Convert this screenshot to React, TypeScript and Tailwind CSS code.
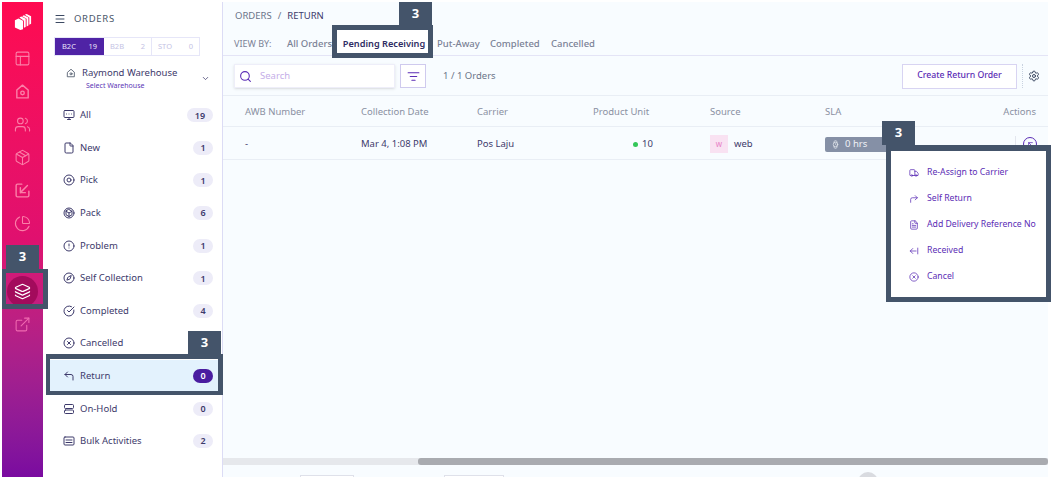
import {
  AlertCircle, ArrowLeftFromLine, ArrowUpLeft, ChevronDown, CircleCheckBig, Compass, CornerUpLeft, CornerUpRight,
  ExternalLink, File, FileText, Layers, ListFilter, Menu, Package, PanelsTopLeft, PieChart, Search, Settings, Truck, Users, Watch, XCircle,
} from 'lucide-react';
import type { ReactNode } from 'react';

const font = { fontFamily: '"Noto Sans", sans-serif' };

const Svg = ({ size = 12, children, className }: { size?: number; children: ReactNode; className?: string }) => (
  <svg viewBox="0 0 24 24" width={size} height={size} fill="none" stroke="currentColor" strokeWidth={2} strokeLinecap="round" strokeLinejoin="round" className={className}>
    {children}
  </svg>
);

const HomeDot = ({ size = 12, className }: { size?: number; strokeWidth?: number; className?: string }) => (
  <Svg size={size} className={className}>
    <path d="M4 10l8-7 8 7v11H4z" />
    <circle cx="12" cy="14" r="2.500" />
  </Svg>
);
const InBox = ({ size = 12, className }: { size?: number; strokeWidth?: number; className?: string }) => (
  <Svg size={size} className={className}>
    <path d="M11 3H5a2 2 0 0 0-2 2v14a2 2 0 0 0 2 2h14a2 2 0 0 0 2-2v-6" />
    <path d="M19 5L9 15M9 8v7h7" />
  </Svg>
);
const Screen = ({ size = 12, className }: { size?: number; strokeWidth?: number; className?: string }) => (
  <Svg size={size} className={className}>
    <rect x="2" y="3" width="20" height="14" rx="2" />
    <path d="M7 10h.01M12 10h.01M17 10h.01M9 21h6M12 17v4" />
  </Svg>
);
const Target = ({ size = 12, className }: { size?: number; strokeWidth?: number; className?: string }) => (
  <Svg size={size} className={className}>
    <circle cx="12" cy="12" r="10" />
    <circle cx="12" cy="12" r="4" />
  </Svg>
);
const RoundBox = ({ size = 12, className }: { size?: number; strokeWidth?: number; className?: string }) => (
  <Svg size={size} className={className}>
    <circle cx="12" cy="12" r="10" />
    <path d="M12 5l6 3.500v7L12 19l-6-3.500v-7zM6 8.500l6 3.500 6-3.500M12 12v7" />
  </Svg>
);
const Hold = ({ size = 12, className }: { size?: number; strokeWidth?: number; className?: string }) => (
  <Svg size={size} className={className}>
    <rect x="3" y="3" width="18" height="8" rx="2" />
    <rect x="3" y="14" width="18" height="7" rx="2" />
  </Svg>
);
const Bulk = ({ size = 12, className }: { size?: number; strokeWidth?: number; className?: string }) => (
  <Svg size={size} className={className}>
    <rect x="2" y="4" width="20" height="16" rx="2" />
    <path d="M6 10h12M6 15h12" />
  </Svg>
);

const menu = [
  { label: 'All', count: 19, icon: Screen },
  { label: 'New', count: 1, icon: File },
  { label: 'Pick', count: 1, icon: Target },
  { label: 'Pack', count: 6, icon: RoundBox },
  { label: 'Problem', count: 1, icon: AlertCircle },
  { label: 'Self Collection', count: 1, icon: Compass },
  { label: 'Completed', count: 4, icon: CircleCheckBig },
  { label: 'Cancelled', count: null, icon: XCircle },
  { label: 'Return', count: 0, icon: CornerUpLeft, active: true },
  { label: 'On-Hold', count: 0, icon: Hold },
  { label: 'Bulk Activities', count: 2, icon: Bulk },
];

const railIcons = [PanelsTopLeft, HomeDot, Users, Package, InBox, PieChart];

const actions = [
  { label: 'Re-Assign to Carrier', icon: Truck },
  { label: 'Self Return', icon: CornerUpRight },
  { label: 'Add Delivery Reference No', icon: FileText },
  { label: 'Received', icon: ArrowLeftFromLine },
  { label: 'Cancel', icon: XCircle },
];

const Tag = ({ className }: { className: string }) => (
  <div className={`absolute flex h-[24px] w-[33px] items-center justify-center bg-[#44546a] text-[13px] font-bold text-white ${className}`}>3</div>
);

const Frame = ({ className }: { className: string }) => (
  <div className={`pointer-events-none absolute border-[#44546a] ${className}`} />
);

export default function App() {
  return (
    <div style={font} className="relative flex h-[477px] w-[1057px] overflow-hidden bg-white pl-[2px] pr-[9px] pt-[2px] text-[10px] text-[#3d3a6b]">
      {/* icon rail */}
      <div className="flex w-[41px] shrink-0 flex-col items-center bg-gradient-to-b from-[#ff0a50] via-[#e0106f] to-[#7a0aa0]">
        <svg viewBox="0 0 20 20" className="mt-[11px] h-[18px] w-[18px]" fill="#fff">
          <path d="M1 8l4-2 5 2.500v9.500l-3 1-6-3zM6 5l2-1 5 2.500v9l-2 1v-8zM9 3.500l2-1 5 2.500v9l-2 1v-8.500zM12 2l2-1 5 2.500v8.500l-2 1v-8z" />
        </svg>
        <div className="mt-[18.500px] flex flex-col items-center gap-[16.100px] text-[#fb7fa8]">
          {railIcons.map((Icon, i) => (
            <Icon key={i} size={17} strokeWidth={1.5} className="shrink-0" />
          ))}
        </div>
        <div className="mt-[44px] flex h-[31px] w-[31px] shrink-0 items-center justify-center rounded-full bg-[#a30b5c]">
          <Layers size={17} color="#fff" strokeWidth={1.7} />
        </div>
        <ExternalLink size={17} strokeWidth={1.5} className="mt-[9px] text-[#f06ab0]" />
      </div>

      {/* orders menu */}
      <div className="flex w-[180px] shrink-0 flex-col border-r border-[#dcdcf5] bg-white">
        <div className="mt-[10px] flex h-[14px] items-center pl-[11px]">
          <Menu size={12} className="text-[#3d4a63]" />
          <span className="ml-[8px] text-[9.500px] tracking-[0.7px] text-[#4a5568]">ORDERS</span>
        </div>
        <div className="ml-[11px] mt-[11px] flex h-[19px] w-[146px] border border-[#e6e6f8] text-[7.500px]">
          <div className="flex w-[49px] items-center justify-between bg-[#4f23a5] px-[7px] text-[#e9e4fa]"><span>B2C</span><span>19</span></div>
          <div className="flex w-[48px] items-center justify-between border-r border-[#e6e6f8] px-[6px] text-[#c4c2e4]"><span>B2B</span><span>2</span></div>
          <div className="flex flex-1 items-center justify-between px-[6px] text-[#c4c2e4]"><span>STO</span><span>0</span></div>
        </div>
        <div className="relative mt-[10px] h-[25px] pl-[23px]">
          <div className="flex items-center gap-[6px]">
            <HomeDot size={10} className="text-[#4a5568]" />
            <span className="text-[9.500px] leading-[14px]">Raymond Warehouse</span>
          </div>
          <div className="ml-[20px] text-[7px] leading-[12px] text-[#5b35b5]">Select Warehouse</div>
          <ChevronDown size={9} className="absolute right-[12px] top-[8px]" />
        </div>
        <div className="mt-[8px] flex flex-col pl-[7px]">
          {menu.map((m) => (
            <div key={m.label} className={`flex h-[32.600px] items-center pl-[13px] pr-[9px] ${m.active ? 'bg-[#e3f2fd]' : ''}`}>
              <m.icon size={12} strokeWidth={2} className="shrink-0 text-[#3d3a6b]" />
              <span className="ml-[5px] flex-1 text-[9.500px]">{m.label}</span>
              {m.count !== null && (
                <span className={`flex h-[14px] items-center justify-center rounded-full text-[9px] font-semibold ${m.count === 19 ? 'w-[26px]' : 'w-[20px]'} ${m.active ? 'bg-[#4a1da0] text-white' : 'bg-[#edecf8]'}`}>
                  {m.count}
                </span>
              )}
            </div>
          ))}
        </div>
      </div>

      {/* main */}
      <div className="flex min-w-0 flex-1 flex-col overflow-hidden bg-[#f8fcff]">
        <div className="mt-[7px] flex h-[14px] items-center pl-[12px] text-[9.500px]">
          <span className="text-[#6b7489]">ORDERS</span>
          <span className="mx-[6px] text-[#6b7489]">/</span>
          <span>RETURN</span>
        </div>
        <div className="mt-[14px] flex h-[19px] items-start border-b border-[#e4e4f6] pl-[11px] text-[9.500px] text-[#7b8296]">
          <span className="w-[53px] text-[9px]">VIEW BY:</span>
          <span className="w-[50px] font-medium">All Orders</span>
          <span className="-mt-[7px] flex h-[23px] w-[91px] shrink-0 items-center justify-center bg-white pl-[3px] pt-[5px] text-[9.200px] font-semibold text-[#2f2c63]">Pending Receiving</span>
          <span className="ml-[9px] w-[53px] font-medium">Put-Away</span>
          <span className="w-[61px] font-medium">Completed</span>
          <span className="font-medium">Cancelled</span>
        </div>
        <div className="flex h-[40px] items-center border-b border-[#e9eef5] pl-[11px] pr-[8px] pt-[1px]">
          <div className="flex h-[24px] w-[161px] items-center border border-[#eeeef9] bg-white pl-[4px] shadow-sm">
            <Search size={13} className="text-[#5b2db5]" />
            <span className="ml-[8px] text-[9.500px] text-[#c5aee8]">Search</span>
          </div>
          <div className="ml-[5px] flex h-[24px] w-[26px] items-center justify-center border border-[#cfcaee] bg-white">
            <ListFilter size={13} className="text-[#5b2db5]" />
          </div>
          <span className="ml-[17px] text-[9.500px] text-[#6b7489]">1 / 1 Orders</span>
          <div className="ml-auto flex h-[25px] w-[115px] items-center justify-center border border-[#d8d4f2] bg-white text-[8.700px] font-medium text-[#5b2db5]">Create Return Order</div>
          <div className="ml-[5px] h-[24px] border-l border-dotted border-[#c9d2e0]" />
          <Settings size={12} className="ml-[5px] text-[#3d4a63]" />
        </div>
        <div className="relative flex h-[31px] items-center border-b border-[#e9eef5] pt-[3px] text-[9.500px] text-[#8a90a2]">
          <span className="ml-[22px] w-[116px]">AWB Number</span>
          <span className="w-[116px]">Collection Date</span>
          <span className="w-[116px]">Carrier</span>
          <span className="w-[117px]">Product Unit</span>
          <span className="w-[115px]">Source</span>
          <span>SLA</span>
          <span className="absolute right-[12px]">Actions</span>
        </div>
        <div className="relative flex h-[33px] items-center border-b border-[#e9eef5] pt-[2px] text-[9.500px]">
          <span className="ml-[22px] w-[116px]">-</span>
          <span className="w-[116px]">Mar 4, 1:08 PM</span>
          <span className="w-[116px]">Pos Laju</span>
          <span className="flex w-[117px] items-center pl-[40px]">
            <span className="mr-[4px] h-[5px] w-[5px] rounded-full bg-[#34c759]" />10
          </span>
          <span className="flex w-[115px] items-center">
            <span className="mr-[6px] flex h-[18px] w-[18px] items-center justify-center bg-[#f9e2f2] text-[8px] text-[#e77fc6]">w</span>web
          </span>
          <span className="flex h-[15px] w-[80px] items-center rounded-[2px] bg-[#8590a6] pl-[6px] text-[#f0f2f6]">
            <Watch size={9} strokeWidth={1.7} />
            <span className="ml-[5px]">0 hrs</span>
          </span>
          <div className="absolute right-[11px] flex h-[14px] w-[14px] items-center justify-center rounded-full border border-[#5b2db5] text-[#5b2db5]">
            <ArrowUpLeft size={9} />
          </div>
          <div className="absolute right-[32px] h-[16px] border-l border-[#e3e6ee]" />
        </div>
        <div className="flex-1" />
        <div className="h-[7px] bg-[#e6e8ec] pl-[195px]">
          <div className="h-full rounded-[3px] bg-[#a9abb0]" />
        </div>
        <div className="flex h-[12px] pl-[77px] pt-[10px]">
          <div className="h-[14px] w-[54px] border border-[#dfe1ea] bg-white" />
          <div className="ml-[90px] h-[14px] w-[60px] border border-[#dfe1ea] bg-white" />
          <div className="-mt-[3px] ml-[354px] h-[20px] w-[20px] rounded-full bg-[#d9dbe0]" />
        </div>
      </div>

      {/* dropdown */}
      <div className="absolute left-[891px] top-[151px] flex h-[146px] w-[155px] flex-col bg-white pl-[18px] pt-[9px] text-[#5b2db5]">
        {actions.map((a) => (
          <div key={a.label} className="flex h-[26px] shrink-0 items-center whitespace-nowrap text-[8.700px]">
            <a.icon size={10} strokeWidth={1.8} className="shrink-0" />
            <span className="ml-[8px]">{a.label}</span>
          </div>
        ))}
      </div>

      {/* annotations */}
      <Frame className="left-[886px] top-[145px] h-[157px] w-[165px] border-[5px] border-t-[6px]" />
      <Tag className="left-[882px] top-[121px]" />
      <Frame className="left-[332px] top-[25px] h-[33px] w-[101px] border-[5px]" />
      <Tag className="left-[399px] top-[2px]" />
      <Frame className="left-[46px] top-[354px] h-[41px] w-[177px] border-[4px] border-r-[5px] border-t-[5px]" />
      <Tag className="left-[188px] top-[331px]" />
      <Frame className="left-[2px] top-[269px] h-[40px] w-[46px] border-[5px] border-l-[4px] border-t-[4px]" />
      <Tag className="left-[6px] top-[245px]" />
    </div>
  );
}
